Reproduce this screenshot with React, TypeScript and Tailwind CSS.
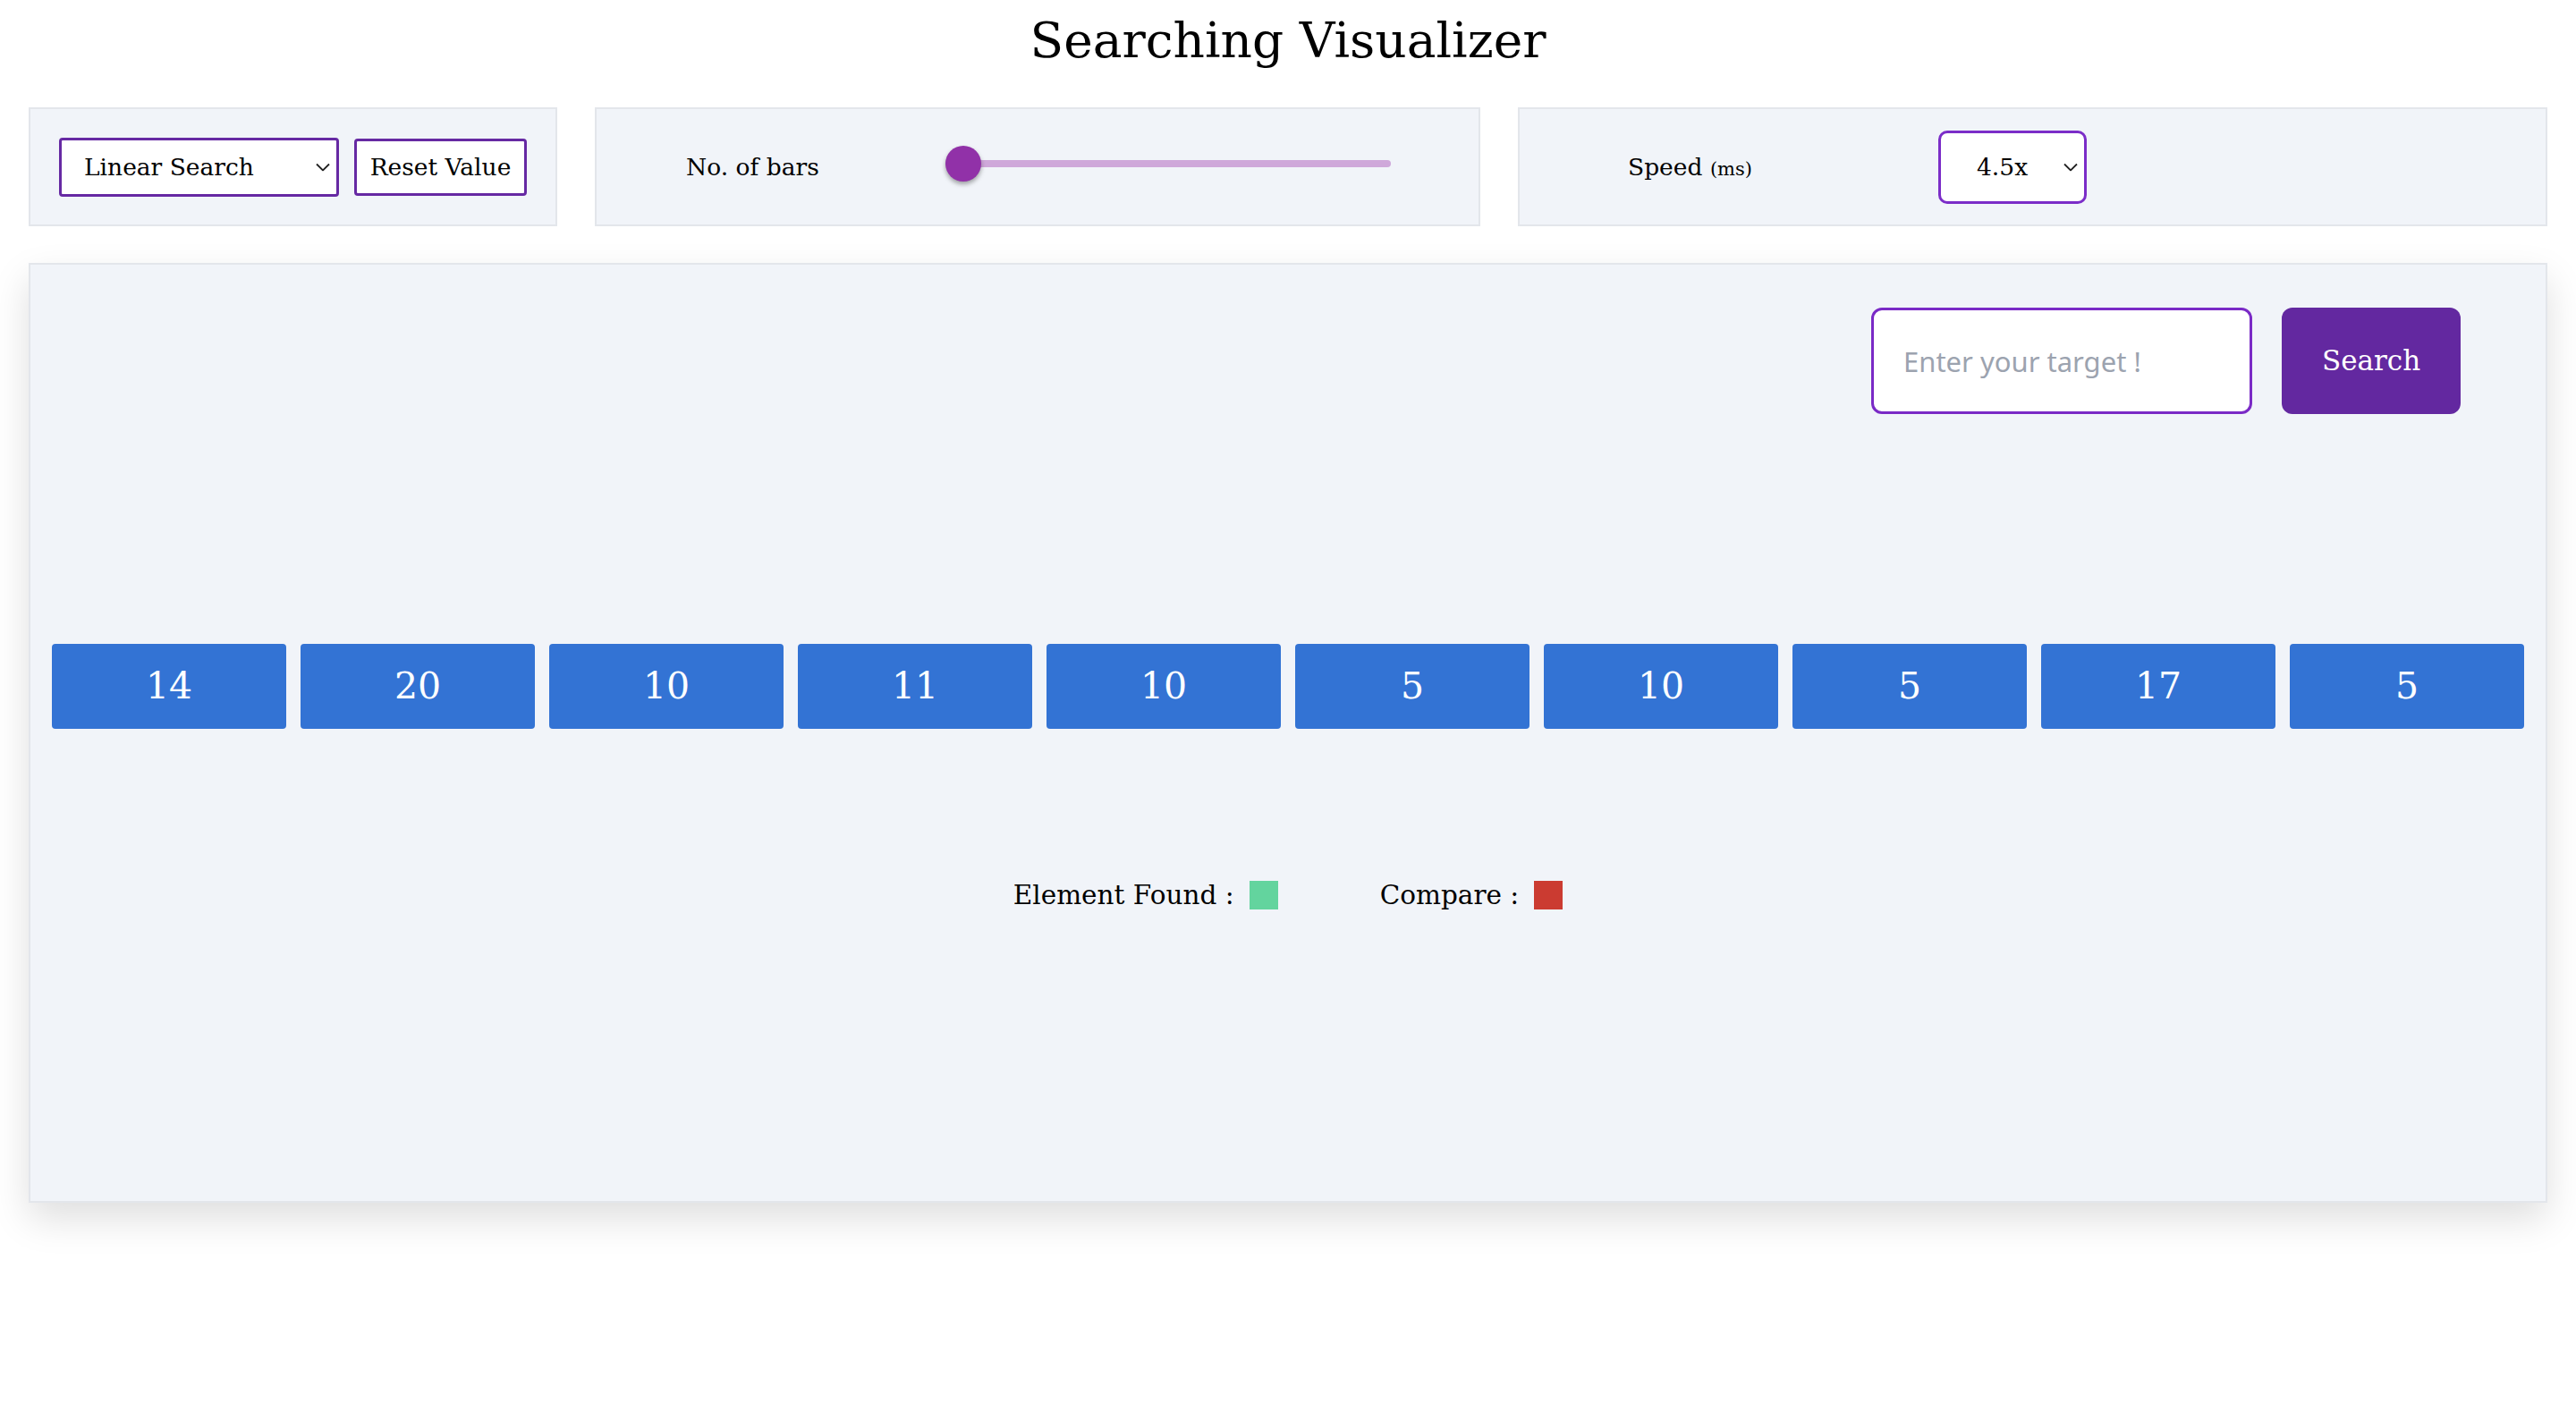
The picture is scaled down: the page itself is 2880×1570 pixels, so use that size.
import { useState } from "react";

const bars = [14, 20, 10, 11, 10, 5, 10, 5, 17, 5];

const serif = "font-['DejaVu_Serif',serif]";

function Chevron() {
  return (
    <svg
      viewBox="0 0 16 9"
      className="pointer-events-none absolute right-[10px] top-1/2 h-[9px] w-[16px] -translate-y-1/2"
      fill="none"
      stroke="#222"
      strokeWidth="1.8"
    >
      <path d="M1 1l7 7 7-7" />
    </svg>
  );
}

export default function App() {
  const [algo, setAlgo] = useState("linear");
  const [speed, setSpeed] = useState("4.5");
  const [target, setTarget] = useState("");

  return (
    <div className={`min-h-screen bg-white text-black ${serif}`}>
      <h1 className="pt-[18px] text-center text-[55px] leading-none">
        Searching Visualizer
      </h1>

      {/* controls */}
      <div className="mt-[47px] flex gap-[42px] px-[32px]">
        <div className="flex h-[133px] w-[591px] items-center gap-[17px] border-2 border-[#e3e6eb] bg-[#f1f4f9] px-[32px]">
          <div className="relative">
            <select
              value={algo}
              onChange={(e) => setAlgo(e.target.value)}
              className="h-[66px] w-[313px] appearance-none rounded-[4px] border-[3px] border-[#6629a3] bg-white pl-[25px] text-[26.5px] outline-none"
            >
              <option value="linear">Linear Search</option>
              <option value="binary">Binary Search</option>
            </select>
            <Chevron />
          </div>
          <button className="h-[64px] w-[193px] rounded-[4px] border-[3px] border-[#6629a3] bg-white text-[26.5px]">
            Reset Value
          </button>
        </div>

        <div className="flex h-[133px] w-[990px] items-center border-2 border-[#e3e6eb] bg-[#f1f4f9] pl-[100px]">
          <span className="w-[290px] text-[26.5px]">No. of bars</span>
          <div className="relative mb-[7px] flex h-[40px] w-[498px] items-center">
            <div className="h-[8px] w-full rounded-full bg-[#cfa8da]" />
            <div className="absolute left-0 top-0 h-[40px] w-[40px] rounded-full bg-[#9131a8] shadow-[0_3px_5px_rgba(0,0,0,0.35)]" />
          </div>
        </div>

        <div className="flex h-[133px] flex-1 items-center border-2 border-[#e3e6eb] bg-[#f1f4f9] pl-[121px]">
          <span className="w-[347px] text-[26.5px]">
            Speed <span className="text-[21px]">(ms)</span>
          </span>
          <div className="relative">
            <select
              value={speed}
              onChange={(e) => setSpeed(e.target.value)}
              className="h-[82px] w-[166px] appearance-none rounded-[10px] border-[3.5px] border-[#7b2dc8] bg-white pl-[40px] text-[26.5px] outline-none"
            >
              <option value="4.5">4.5x</option>
              <option value="1">1x</option>
              <option value="2">2x</option>
            </select>
            <Chevron />
          </div>
        </div>
      </div>

      {/* board */}
      <div className="mx-[32px] mt-[41px] flex h-[1051px] flex-col border-2 border-[#e3e6eb] bg-[#f1f4f9] shadow-[0_18px_40px_rgba(0,0,0,0.13)]">
        <div className="mt-[48px] flex justify-end gap-[33px] pr-[95px]">
          <input
            value={target}
            onChange={(e) => setTarget(e.target.value)}
            placeholder="Enter your target !"
            className="h-[119px] w-[426px] rounded-[12px] border-[3.5px] border-[#7a2ac6] bg-white px-[33px] font-['Noto_Sans',sans-serif] text-[31px] outline-none placeholder:text-[#9ca3af]"
          />
          <button className="h-[119px] w-[200px] rounded-[12px] bg-[#6328a0] text-[31px] text-white">
            Search
          </button>
        </div>

        <div className="mt-[257px] flex gap-[16px] px-[24px]">
          {bars.map((v, i) => (
            <div
              key={i}
              className="flex h-[95px] flex-1 items-center justify-center rounded-[4px] bg-[#3373d4] text-[41px] text-white"
            >
              {v}
            </div>
          ))}
        </div>

        <div className="mt-[164px] flex items-center justify-center text-[29.5px]">
          <span>Element Found :</span>
          <span className="ml-[17px] h-[32px] w-[32px] bg-[#63d49e]" />
          <span className="ml-[114px]">Compare :</span>
          <span className="ml-[17px] h-[32px] w-[32px] bg-[#cb3b31]" />
        </div>
      </div>
    </div>
  );
}
